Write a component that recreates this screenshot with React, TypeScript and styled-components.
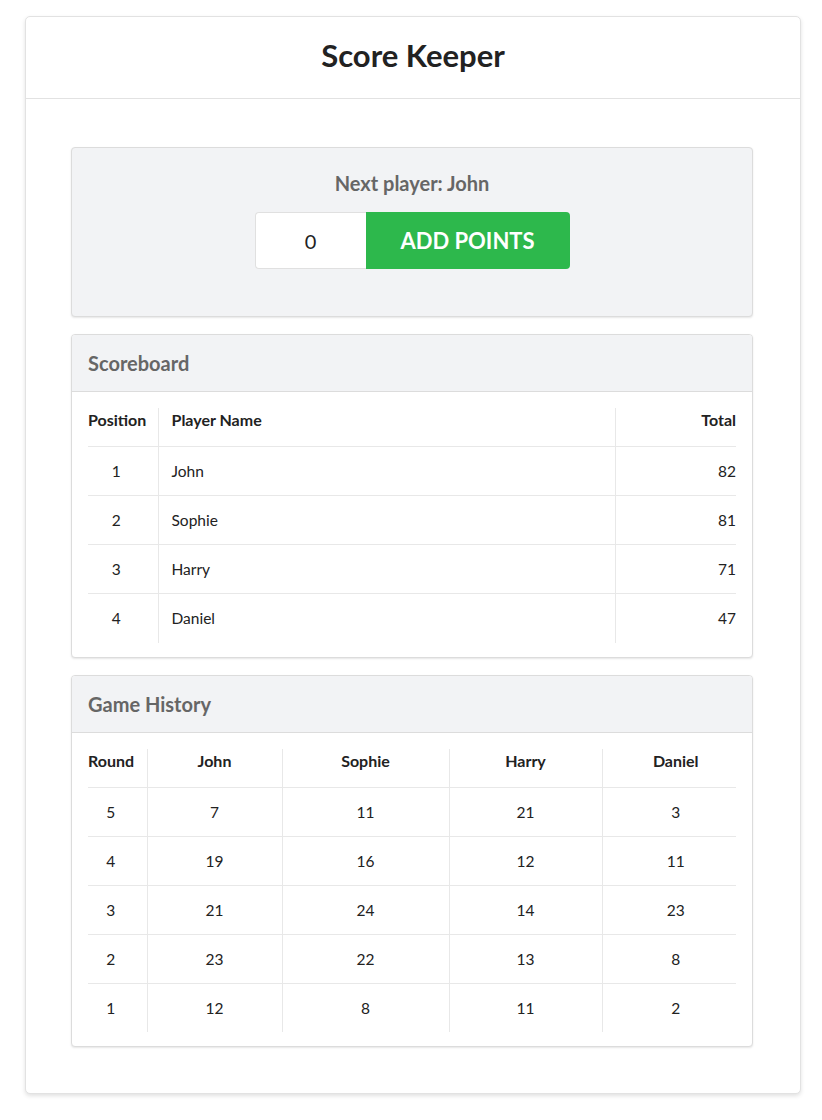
import React from "react";
import styled, { createGlobalStyle } from "styled-components";

const Global = createGlobalStyle`
  html, body { margin: 0; padding: 0; background: #ffffff; }
  body { font-family: Lato, "Open Sans", "Liberation Sans", sans-serif; color: #222; }
  * { box-sizing: border-box; }
`;

const Page = styled.div`
  padding: 16px 21px 26px 25px;
`;

const Card = styled.div`
  background: #fff;
  border: 1px solid #e2e2e2;
  border-radius: 5px;
  box-shadow: 0 2px 4px rgba(0, 0, 0, 0.12);
`;

const CardHeader = styled.header`
  height: 82px;
  border-bottom: 1px solid #e2e2e2;
  display: flex;
  align-items: center;
  justify-content: center;
`;

const Title = styled.h1`
  margin: 0;
  font-size: 31px;
  font-weight: 700;
  color: #222;
  padding-bottom: 5px;
`;

const CardBody = styled.div`
  padding: 48px 47px 46px 45px;
  display: flex;
  flex-direction: column;
  gap: 17px;
`;

const Panel = styled.section`
  background: #fff;
  border: 1px solid #dcdcdc;
  border-radius: 4px;
  box-shadow: 0 1px 2px rgba(0, 0, 0, 0.1);
  overflow: hidden;
`;

const EntryPanel = styled(Panel)`
  background: #f2f3f5;
  padding: 23px 0 47px;
  display: flex;
  flex-direction: column;
  align-items: center;
  gap: 17px;
`;

const NextPlayer = styled.div`
  font-size: 20px;
  font-weight: 700;
  color: #666;
  line-height: 24px;
`;

const EntryRow = styled.div`
  display: flex;
  height: 57px;
`;

const PointsInput = styled.input`
  width: 111px;
  height: 57px;
  border: 1px solid #e0e0e0;
  border-right: none;
  border-radius: 4px 0 0 4px;
  background: #fff;
  font-family: Lato, "Open Sans", sans-serif;
  font-size: 20px;
  color: #222;
  text-align: center;
  outline: none;
  padding: 0;
`;

const AddButton = styled.button`
  width: 204px;
  height: 57px;
  border: none;
  border-radius: 0 4px 4px 0;
  background: #2db84c;
  color: #fff;
  font-family: Lato, "Open Sans", sans-serif;
  font-size: 22px;
  font-weight: 700;
  cursor: pointer;
  padding: 0;
`;

const PanelHeader = styled.div`
  height: 57px;
  background: #f2f3f5;
  border-bottom: 1px solid #dcdcdc;
  display: flex;
  align-items: center;
  padding: 0 16px;
  font-size: 20px;
  font-weight: 700;
  color: #666;
`;

const PanelBody = styled.div`
  padding: 16px 16px 14px 16px;
`;

const Table = styled.table`
  width: 100%;
  border-collapse: collapse;
  table-layout: fixed;
`;

type Align = "left" | "center" | "right";

const Th = styled.th<{ $align: Align }>`
  text-align: ${(p) => p.$align};
  font-size: 16px;
  font-weight: 700;
  color: #222;
  line-height: 19px;
  padding: 2px 13px 17px;
  border-left: 1px solid #e8e8e8;
  border-bottom: 1px solid #e8e8e8;
  &:first-child { border-left: none; padding-left: 0; }
  &:last-child { padding-right: 0; }
`;

const Td = styled.td<{ $align: Align }>`
  text-align: ${(p) => p.$align};
  font-size: 15.5px;
  color: #222;
  line-height: 18px;
  height: 49px;
  padding: 0 13px;
  border-left: 1px solid #e8e8e8;
  &:first-child { border-left: none; padding-left: 0; }
  &:last-child { padding-right: 0; }
`;

const Tr = styled.tr`
  border-bottom: 1px solid #e8e8e8;
  &:last-child { border-bottom: none; }
`;

const players = [
  { pos: 1, name: "John", total: 82 },
  { pos: 2, name: "Sophie", total: 81 },
  { pos: 3, name: "Harry", total: 71 },
  { pos: 4, name: "Daniel", total: 47 },
];

const history = [
  [5, 7, 11, 21, 3],
  [4, 19, 16, 12, 11],
  [3, 21, 24, 14, 23],
  [2, 23, 22, 13, 8],
  [1, 12, 8, 11, 2],
];

const historyCols = [59, 135, 167, 153, 134];
const historyHead = ["Round", "John", "Sophie", "Harry", "Daniel"];

export default function App() {
  return (
    <>
      <Global />
      <Page>
        <Card>
          <CardHeader>
            <Title>Score Keeper</Title>
          </CardHeader>
          <CardBody>
            <EntryPanel>
              <NextPlayer>Next player: John</NextPlayer>
              <EntryRow>
                <PointsInput type="text" defaultValue="0" />
                <AddButton>ADD POINTS</AddButton>
              </EntryRow>
            </EntryPanel>

            <Panel>
              <PanelHeader>Scoreboard</PanelHeader>
              <PanelBody>
                <Table>
                  <colgroup>
                    <col style={{ width: 70 }} />
                    <col style={{ width: 457 }} />
                    <col />
                  </colgroup>
                  <thead>
                    <tr>
                      <Th $align="center">Position</Th>
                      <Th $align="left">Player Name</Th>
                      <Th $align="right">Total</Th>
                    </tr>
                  </thead>
                  <tbody>
                    {players.map((p) => (
                      <Tr key={p.pos}>
                        <Td $align="center">{p.pos}</Td>
                        <Td $align="left">{p.name}</Td>
                        <Td $align="right">{p.total}</Td>
                      </Tr>
                    ))}
                  </tbody>
                </Table>
              </PanelBody>
            </Panel>

            <Panel>
              <PanelHeader>Game History</PanelHeader>
              <PanelBody>
                <Table>
                  <colgroup>
                    {historyCols.map((w, i) => (
                      <col key={i} style={{ width: w }} />
                    ))}
                  </colgroup>
                  <thead>
                    <tr>
                      {historyHead.map((h) => (
                        <Th key={h} $align="center">{h}</Th>
                      ))}
                    </tr>
                  </thead>
                  <tbody>
                    {history.map((row) => (
                      <Tr key={row[0]}>
                        {row.map((v, i) => (
                          <Td key={i} $align="center">{v}</Td>
                        ))}
                      </Tr>
                    ))}
                  </tbody>
                </Table>
              </PanelBody>
            </Panel>
          </CardBody>
        </Card>
      </Page>
    </>
  );
}
